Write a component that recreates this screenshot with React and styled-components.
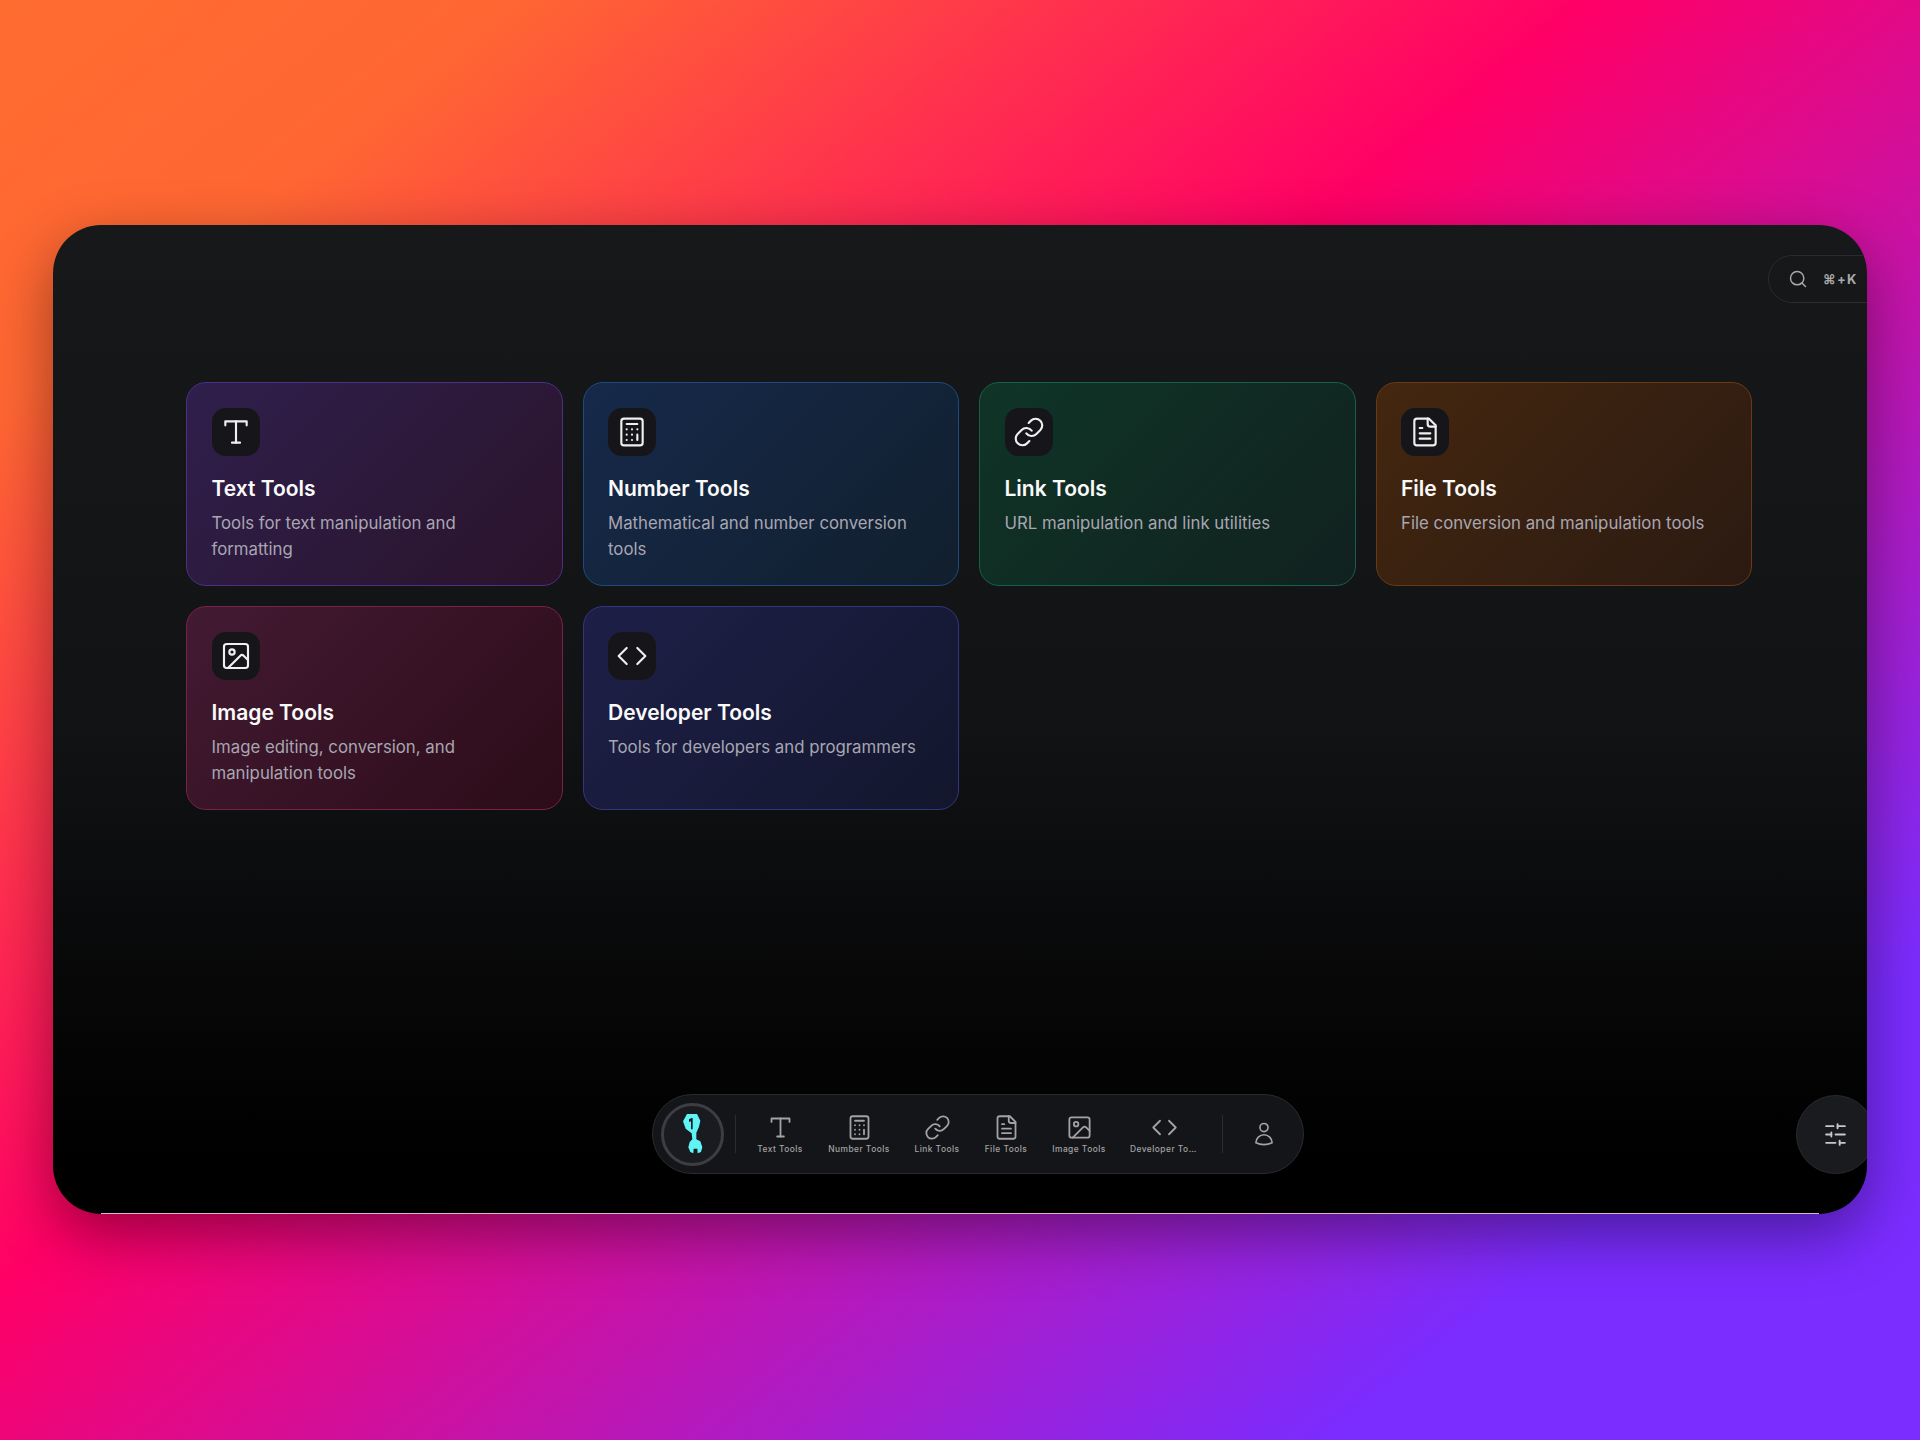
import React from "react";
import styled, { createGlobalStyle } from "styled-components";
import { HiOutlineUser } from "react-icons/hi2";
import {
  LuType,
  LuCalculator,
  LuLink,
  LuFileText,
  LuImage,
  LuCode,
  LuSearch,
  LuSlidersHorizontal,
} from "react-icons/lu";

const GlobalStyle = createGlobalStyle`
  html, body {
    margin: 0;
    padding: 0;
  }
  body {
    font-family: Inter, "Liberation Sans", sans-serif;
  }
`;

const Page = styled.div`
  width: 1920px;
  height: 1440px;
  box-sizing: border-box;
  padding: 225px 53px 226px;
  background: linear-gradient(141deg, #ff6c30 0%, #ff6633 14%, #ff0066 43%, #7b2cff 84%);
  overflow: hidden;
`;

const Window = styled.div`
  position: relative;
  height: 100%;
  box-sizing: border-box;
  border-radius: 48px;
  background: linear-gradient(180deg, #17181a 0%, #121315 50%, #000 94%);
  box-shadow: 0 20px 60px rgba(0, 0, 0, 0.4);
  display: flex;
  flex-direction: column;
  overflow: hidden;

  &::after {
    content: "";
    position: absolute;
    left: 48px;
    right: 48px;
    bottom: 0;
    height: 1px;
    background: #d9b6c8;
  }
`;

const TopBar = styled.div`
  display: flex;
  justify-content: flex-end;
  padding-top: 30px;
  height: 48px;
  margin-right: -30px;
`;

const SearchPill = styled.div`
  display: flex;
  align-items: center;
  gap: 15px;
  width: 129px;
  height: 48px;
  box-sizing: border-box;
  padding-left: 19px;
  border: 1px solid #2a2b2e;
  border-radius: 24px;
  color: #a9a9ab;
`;

const Shortcut = styled.span`
  font-size: 13px;
  font-weight: 700;
  letter-spacing: 1.3px;
`;

const Grid = styled.div`
  display: grid;
  grid-template-columns: repeat(4, 1fr);
  grid-auto-rows: 204px;
  gap: 20px;
  padding: 79px 115px 0 133px;
`;

const Card = styled.div`
  box-sizing: border-box;
  padding: 25px 25px 25px 24.5px;
  border-radius: 20px;
  border: 1px solid ${(p) => p.$border};
  background: linear-gradient(135deg, ${(p) => p.$from}, ${(p) => p.$to});
`;

const IconBox = styled.div`
  width: 48px;
  height: 48px;
  border-radius: 14px;
  background: #16161a;
  color: #f0f0f0;
  display: flex;
  align-items: center;
  justify-content: center;
  margin-bottom: 18.5px;
`;

const CardTitle = styled.h3`
  margin: 0 0 7px;
  font-size: 21px;
  line-height: 28px;
  font-weight: 600;
  color: #fafafa;
`;

const CardText = styled.p`
  margin: 0;
  font-size: 16.8px;
  line-height: 26px;
  font-weight: 400;
  color: #a8a6b2;
`;

const Bottom = styled.div`
  margin-top: auto;
  margin-bottom: 40px;
  display: flex;
  position: relative;
  justify-content: center;
  padding-left: 36px;
`;

const Dock = styled.div`
  display: flex;
  align-items: center;
  width: 652px;
  height: 80px;
  box-sizing: border-box;
  padding: 0 8px;
  background: #141518;
  border: 1px solid #2a2b2e;
  border-radius: 40px;
`;

const LogoCircle = styled.div`
  width: 63px;
  height: 63px;
  flex: none;
  box-sizing: border-box;
  border-radius: 50%;
  border: 3px solid #3c3e42;
  background: #191b20;
  display: flex;
  align-items: center;
  justify-content: center;
`;

const DockDivider = styled.div`
  width: 1px;
  height: 38px;
  flex: none;
  background: #2b2c2f;
  margin: ${(p) => p.$margin};
`;

const DockItem = styled.div`
  width: ${(p) => p.$width}px;
  flex: none;
  display: flex;
  flex-direction: column;
  align-items: center;
  gap: 2px;
  color: #a3a3a5;
`;

const DockLabel = styled.span`
  max-width: 68px;
  font-size: 8.4px;
  line-height: 12px;
  font-weight: 500;
  letter-spacing: 0.47px;
  white-space: nowrap;
  overflow: hidden;
  text-overflow: ellipsis;
`;

const UserButton = styled.div`
  margin-left: 28px;
  color: #a3a3a5;
  display: flex;
`;

const SettingsButton = styled.div`
  position: absolute;
  right: -8px;
  top: 1px;
  width: 79px;
  height: 79px;
  box-sizing: border-box;
  border-radius: 50%;
  border: 1px solid #2a2b2e;
  background: #1a1b1f;
  color: #c9c9cb;
  display: flex;
  align-items: center;
  justify-content: center;
`;

const tools = [
  { title: "Text Tools", text: "Tools for text manipulation and formatting", Icon: LuType, from: "#2f1f4c", to: "#2a132a", border: "#4b3085" },
  { title: "Number Tools", text: "Mathematical and number conversion tools", Icon: LuCalculator, from: "#16294a", to: "#111f2d", border: "#1e4a80" },
  { title: "Link Tools", text: "URL manipulation and link utilities", Icon: LuLink, from: "#0f3527", to: "#11211f", border: "#17604a" },
  { title: "File Tools", text: "File conversion and manipulation tools", Icon: LuFileText, from: "#44270f", to: "#2b1a12", border: "#6b3a14" },
  { title: "Image Tools", text: "Image editing, conversion, and manipulation tools", Icon: LuImage, from: "#431a33", to: "#2c0c18", border: "#7a2148" },
  { title: "Developer Tools", text: "Tools for developers and programmers", Icon: LuCode, from: "#1e1f48", to: "#12172d", border: "#34357f" },
];

const dockItems = [
  { label: "Text Tools", Icon: LuType, width: 73 },
  { label: "Number Tools", Icon: LuCalculator, width: 85 },
  { label: "Link Tools", Icon: LuLink, width: 71 },
  { label: "File Tools", Icon: LuFileText, width: 67 },
  { label: "Image Tools", Icon: LuImage, width: 79 },
  { label: "Developer Tools", Icon: LuCode, width: 91 },
];

const Logo = () => (
  <svg width="20" height="40" viewBox="40 42 60 120">
    <path
      fill="#5ff3f5"
      fillRule="evenodd"
      d="M52 42L82 42L92 62L88 80L80 98L80 118L92 124L98 142L94 156L84 160L83 146L72 146L71 160L62 156L56 142L60 126L68 118L66 100L48 86L40 64ZM58 58L66 54L69 54L69 88L64 88L64 64L58 66Z"
    />
  </svg>
);

export default function App() {
  return (
    <Page>
      <GlobalStyle />
      <Window>
        <TopBar>
          <SearchPill>
            <LuSearch size={20} strokeWidth={1.75} />
            <Shortcut>⌘+K</Shortcut>
          </SearchPill>
        </TopBar>
        <Grid>
          {tools.map(({ title, text, Icon, from, to, border }) => (
            <Card key={title} $from={from} $to={to} $border={border}>
              <IconBox>
                <Icon size={32} strokeWidth={1.6} />
              </IconBox>
              <CardTitle>{title}</CardTitle>
              <CardText>{text}</CardText>
            </Card>
          ))}
        </Grid>
        <Bottom>
          <Dock>
            <LogoCircle>
              <Logo />
            </LogoCircle>
            <DockDivider $margin="0 7.5px 0 11px" />
            {dockItems.map(({ label, Icon, width }) => (
              <DockItem key={label} $width={width}>
                <Icon size={27} strokeWidth={1.6} />
                <DockLabel>{label}</DockLabel>
              </DockItem>
            ))}
            <DockDivider $margin="0 0 0 12.5px" />
            <UserButton>
              <HiOutlineUser size={26} />
            </UserButton>
          </Dock>
          <SettingsButton>
            <LuSlidersHorizontal size={25} strokeWidth={1.8} />
          </SettingsButton>
        </Bottom>
      </Window>
    </Page>
  );
}
